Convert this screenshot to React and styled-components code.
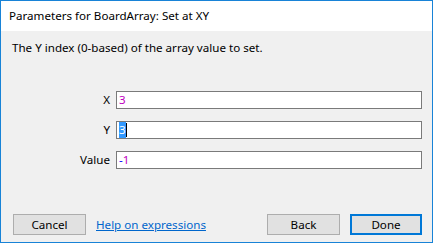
import React from 'react';
import styled, { createGlobalStyle } from 'styled-components';

const GlobalStyle = createGlobalStyle`
  html, body {
    margin: 0;
    padding: 0;
    background: #ffffff;
  }
  * {
    box-sizing: border-box;
  }
`;

const Window = styled.div`
  width: 433px;
  height: 243px;
  border: 1px solid #1883d7;
  display: flex;
  flex-direction: column;
  font-family: 'Noto Sans', 'Open Sans', sans-serif;
  font-size: 11.6px;
  color: #000000;
  overflow: hidden;
`;

const TitleBar = styled.div`
  height: 30px;
  background: #ffffff;
  display: flex;
  align-items: center;
  padding-left: 8px;
  padding-bottom: 1px;
  color: #000000;
`;

const Body = styled.div`
  flex: 1;
  background: #f0f0f0;
  display: flex;
  flex-direction: column;
  padding: 9px 10px 7px 11px;
`;

const Description = styled.div`
  line-height: 16px;
`;

const Form = styled.div`
  display: grid;
  grid-template-columns: 98px 1fr;
  column-gap: 6px;
  row-gap: 12px;
  margin-top: 35px;
`;

const Label = styled.label`
  text-align: right;
  line-height: 18px;
`;

const Field = styled.div`
  height: 18px;
  border: 1px solid #7a7a7a;
  background: #ffffff;
  display: flex;
  align-items: center;
  padding-left: 2px;
  line-height: 16px;
`;

const Token = styled.span`
  color: ${(p) => (p.$kind === 'op' ? '#0000ff' : '#c000c0')};
  background: ${(p) => (p.$selected ? '#3399ff' : 'transparent')};
  ${(p) => p.$selected && 'color: #ffffff;'}
`;

const Caret = styled.span`
  display: inline-block;
  width: 1px;
  height: 14px;
  background: #000000;
`;

const Footer = styled.div`
  margin-top: auto;
  display: flex;
  align-items: center;
  padding-left: 1px;
`;

const Button = styled.button`
  width: ${(p) => p.$width || 73}px;
  height: 21px;
  padding: 0;
  font-family: inherit;
  font-size: 11.6px;
  color: #000000;
  background: #e1e1e1;
  border: ${(p) => (p.$primary ? '2px solid #0078d7' : '1px solid #adadad')};
  margin-left: ${(p) => p.$gap || 0}px;
`;

const HelpLink = styled.a`
  margin-left: 10px;
  color: #0066cc;
  text-decoration: underline;
  cursor: pointer;
`;

const Spacer = styled.div`
  flex: 1;
`;

export default function App() {
  return (
    <>
      <GlobalStyle />
      <Window>
        <TitleBar>Parameters for BoardArray: Set at XY</TitleBar>
        <Body>
          <Description>The Y index (0-based) of the array value to set.</Description>
          <Form>
            <Label>X</Label>
            <Field>
              <Token>3</Token>
            </Field>
            <Label>Y</Label>
            <Field>
              <Token $selected>3</Token>
              <Caret />
            </Field>
            <Label>Value</Label>
            <Field>
              <Token $kind="op">-</Token>
              <Token>1</Token>
            </Field>
          </Form>
          <Footer>
            <Button>Cancel</Button>
            <HelpLink>Help on expressions</HelpLink>
            <Spacer />
            <Button>Back</Button>
            <Button $primary $width={72} $gap={10}>Done</Button>
          </Footer>
        </Body>
      </Window>
    </>
  );
}
